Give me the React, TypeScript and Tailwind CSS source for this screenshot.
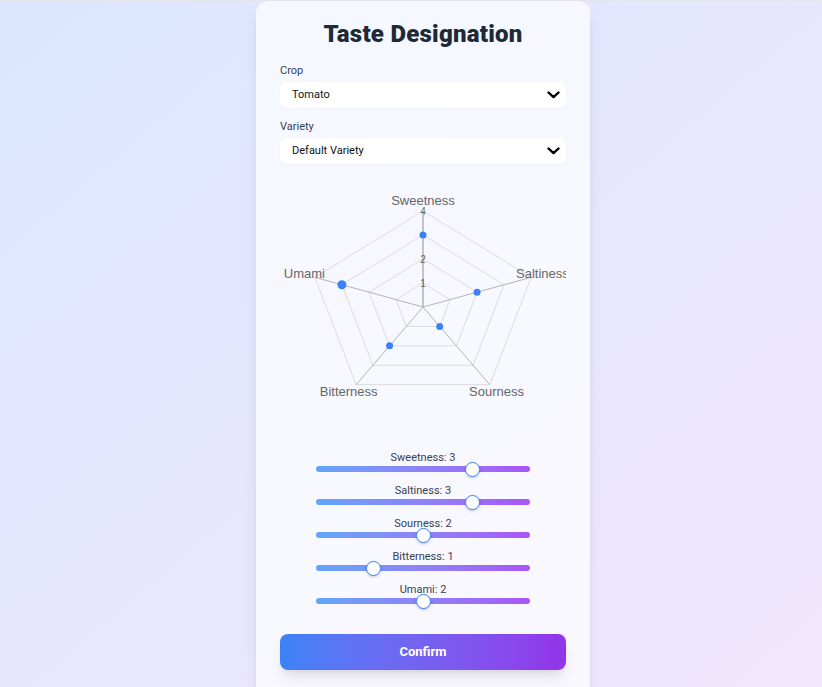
import React, { useState } from 'react';

const axes = ['Sweetness', 'Saltiness', 'Sourness', 'Bitterness', 'Umami'];
const chartValues = [3, 2, 1, 2, 3];

const CX = 143;
const CY = 132;
const RX = 113.7;
const RY = 96;
const MAX = 4;

function pt(i: number, v: number) {
  const a = ((-90 + i * 72) * Math.PI) / 180;
  return [CX + Math.cos(a) * RX * (v / MAX), CY + Math.sin(a) * RY * (v / MAX)];
}

function ring(v: number) {
  return axes.map((_, i) => pt(i, v).join(',')).join(' ');
}

function RadarChart() {
  const labels = [
    { text: 'Sweetness', x: 143, y: 30, anchor: 'middle' },
    { text: 'Saltiness', x: 236, y: 103, anchor: 'start' },
    { text: 'Sourness', x: 216.5, y: 221, anchor: 'middle' },
    { text: 'Bitterness', x: 68.7, y: 221, anchor: 'middle' },
    { text: 'Umami', x: 45, y: 103, anchor: 'end' },
  ];
  return (
    <svg width="286" height="275" viewBox="0 0 286 275" className="block">
      {[1, 2, 3, 4].map((v) => (
        <polygon key={v} points={ring(v)} fill="none" stroke="#dcdcdc" strokeWidth="1" />
      ))}
      {axes.map((_, i) => {
        const [x, y] = pt(i, MAX);
        return (
          <line
            key={i}
            x1={CX}
            y1={CY}
            x2={x}
            y2={y}
            stroke={i === 0 ? '#c4c4c4' : '#b4b4b4'}
            strokeWidth={i === 0 ? 2 : 1}
          />
        );
      })}
      {[
        { t: '4', v: 4 },
        { t: '2', v: 2 },
        { t: '1', v: 1 },
      ].map((k) => (
        <text
          key={k.t}
          x={CX}
          y={CY - RY * (k.v / MAX) + 3.5}
          textAnchor="middle"
          fontSize="10"
          fill="#666"
          fontFamily="'Liberation Sans', Arial, sans-serif"
        >
          {k.t}
        </text>
      ))}
      {labels.map((l) => (
        <text
          key={l.text}
          x={l.x}
          y={l.y}
          textAnchor={l.anchor as 'middle' | 'start' | 'end'}
          fontSize="13"
          fill="#666"
          fontFamily="'Liberation Sans', Arial, sans-serif"
        >
          {l.text}
        </text>
      ))}
      {chartValues.map((v, i) => {
        const [x, y] = pt(i, v);
        return <circle key={i} cx={x} cy={y} r={i === 4 ? 4.5 : 3.5} fill="#3b82f6" />;
      })}
    </svg>
  );
}

function Chevron() {
  return (
    <svg width="13" height="8" viewBox="0 0 13 8" className="pointer-events-none absolute right-[6px] top-1/2 -translate-y-1/2">
      <path d="M1.5 1.5 L6.5 6.2 L11.5 1.5" fill="none" stroke="#000" strokeWidth="2.4" strokeLinecap="round" strokeLinejoin="round" />
    </svg>
  );
}

function SelectField({ label, value, options }: { label: string; value: string; options: string[] }) {
  const [v, setV] = useState(value);
  return (
    <div className="mb-[11px]">
      <label className="mb-[3px] block text-[11px] leading-4 text-[#374151]">{label}</label>
      <div className="relative">
        <select
          value={v}
          onChange={(e) => setV(e.target.value)}
          className="block h-[26px] w-full appearance-none rounded-md bg-white pl-3 pr-8 text-[11px] text-[#111] shadow-[0_1px_2px_rgba(0,0,0,0.03)] outline-none"
        >
          {options.map((o) => (
            <option key={o}>{o}</option>
          ))}
        </select>
        <Chevron />
      </div>
    </div>
  );
}

export default function App() {
  const [taste, setTaste] = useState<Record<string, number>>({
    Sweetness: 3,
    Saltiness: 3,
    Sourness: 2,
    Bitterness: 1,
    Umami: 2,
  });

  return (
    <div
      className="min-h-screen border-t border-[#e3e5ea] bg-gradient-to-br from-[#dbe7fe] to-[#f1e6fe] pl-6"
      style={{ fontFamily: 'Roboto, "Noto Sans", sans-serif' }}
    >
      <div className="mx-auto min-h-[700px] w-[334px] rounded-xl bg-white/70 px-6 pt-[17px] pb-8 shadow-lg">
        <h1 className="mb-[13px] text-center text-[24px] leading-8 font-black tracking-[0.01em] text-[#1f2937]">
          Taste Designation
        </h1>

        <SelectField label="Crop" value="Tomato" options={['Tomato', 'Cucumber', 'Pepper']} />
        <SelectField label="Variety" value="Default Variety" options={['Default Variety']} />

        <div className="mt-[3px] h-[275px]">
          <RadarChart />
        </div>

        <div className="flex flex-col items-center gap-[11px]">
          {axes.map((a) => (
            <div key={a} className="flex w-3/4 flex-col items-center">
              <span className="text-[11px] leading-4 text-[#374151]">
                {a}: {taste[a]}
              </span>
              <input
                type="range"
                min={0}
                max={4}
                step={1}
                value={taste[a]}
                onChange={(e) => setTaste((t) => ({ ...t, [a]: Number(e.target.value) }))}
                className="block h-1.5 w-full cursor-pointer appearance-none rounded-full bg-gradient-to-r from-[#60a5fa] to-[#a855f7] outline-none [&::-webkit-slider-thumb]:h-[15px] [&::-webkit-slider-thumb]:w-[15px] [&::-webkit-slider-thumb]:appearance-none [&::-webkit-slider-thumb]:rounded-full [&::-webkit-slider-thumb]:border-[1.5px] [&::-webkit-slider-thumb]:border-[#3b82f6] [&::-webkit-slider-thumb]:bg-white [&::-webkit-slider-thumb]:shadow-[0_1px_3px_rgba(0,0,0,0.2)]"
              />
            </div>
          ))}
        </div>

        <button
          type="button"
          className="mt-[30px] h-9 w-full rounded-lg bg-gradient-to-r from-[#3b82f6] to-[#9333ea] text-[13px] font-bold text-white shadow-lg"
        >
          Confirm
        </button>
      </div>
    </div>
  );
}
